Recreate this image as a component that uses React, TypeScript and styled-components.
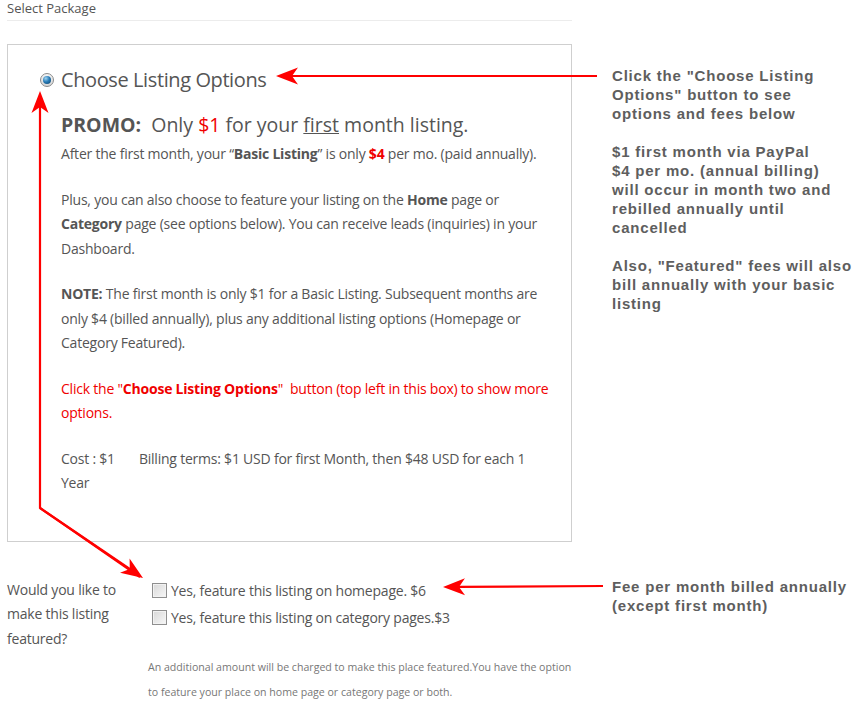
import React from "react"
import styled, { createGlobalStyle } from "styled-components"

const GlobalStyle = createGlobalStyle`
  html, body {
    margin: 0;
    padding: 0;
    background: #fff;
  }
  body {
    font-family: "Open Sans", "Liberation Sans", sans-serif;
    color: #555;
  }
`

const Page = styled.div`
  position: relative;
  width: 862px;
  height: 706px;
  overflow: hidden;
  padding: 0 7px;
  box-sizing: border-box;
`
const Header = styled.div`
  width: 565px;
  font-size: 13px;
  line-height: 16px;
  padding-bottom: 4px;
  border-bottom: 1px solid #ececec;
`
const Row = styled.div<{ $top: number }>`
  display: flex;
  align-items: flex-start;
  gap: 40px;
  margin-top: ${p => p.$top}px;
`
const Box = styled.div`
  width: 565px;
  box-sizing: border-box;
  border: 1px solid #cfcfcf;
  padding: 21px 20px 45px 32px;
  flex-shrink: 0;
`
const TitleRow = styled.div`
  display: flex;
  align-items: center;
  gap: 7px;
  font-size: 20px;
  line-height: 28px;
  letter-spacing: -0.4px;
`
const Radio = styled.span`
  width: 14px;
  height: 14px;
  border-radius: 50%;
  box-sizing: border-box;
  border: 1px solid #8a8a8a;
  background: linear-gradient(#f4f4f4, #d6d6d6);
  display: flex;
  align-items: center;
  justify-content: center;
  &::after {
    content: "";
    width: 8px;
    height: 8px;
    border-radius: 50%;
    background: radial-gradient(circle at 35% 30%, #9fd3f0 0, #2a7db8 45%, #0b3d66 100%);
  }
`
const Content = styled.div`
  margin-left: 21px;
  font-size: 14px;
  line-height: 24.5px;
  letter-spacing: -0.22px;
`
const Promo = styled.div`
  font-size: 19.5px;
  line-height: 28px;
  letter-spacing: 0;
  margin-top: 17px;
  margin-bottom: 3px;
`
const Para = styled.p<{ $red?: boolean }>`
  margin: 0 0 21px;
  color: ${p => (p.$red ? "#f00000" : "#555")};
  &:last-child {
    margin-bottom: 0;
  }
`
const Red = styled.span`
  color: #f00000;
`
const Spacer = styled.span`
  display: inline-block;
  width: 24px;
`
const Note = styled.div<{ $top: number }>`
  margin-top: ${p => p.$top}px;
  width: 250px;
  font-family: "Liberation Sans", Arial, sans-serif;
  font-weight: bold;
  font-size: 15px;
  line-height: 19px;
  letter-spacing: 0.8px;
  color: #5e5e5e;
  white-space: nowrap;
  p {
    margin: 0 0 19px;
  }
`
const Question = styled.div`
  width: 141px;
  flex-shrink: 0;
  font-size: 14px;
  line-height: 24.6px;
  letter-spacing: -0.22px;
`
const Options = styled.div`
  width: 424px;
  flex-shrink: 0;
  padding-left: 4px;
  box-sizing: border-box;
  display: flex;
  flex-direction: column;
  gap: 2px;
  font-size: 14px;
  line-height: 25px;
  letter-spacing: -0.22px;
`
const Option = styled.label`
  display: flex;
  align-items: center;
  gap: 4px;
`
const Check = styled.span`
  width: 15px;
  height: 15px;
  box-sizing: border-box;
  border: 1px solid #8f8f8f;
  background: linear-gradient(135deg, #d8d8d8, #f7f7f7);
  box-shadow: inset 0 0 0 1px #f2f2f2;
`
const Left = styled.div`
  display: flex;
  width: 565px;
  flex-shrink: 0;
`
const Disclaimer = styled.div`
  margin: 4px 0 0 141px;
  font-size: 10.6px;
  line-height: 25px;
  color: #777;
  width: 430px;
`
const Overlay = styled.svg`
  position: absolute;
  left: 0;
  top: 0;
  pointer-events: none;
`

type Pt = [number, number]

const Arrow = ({ points }: { points: Pt[] }) => {
  const tip = points[points.length - 1]
  const prev = points[points.length - 2]
  const dx = tip[0] - prev[0]
  const dy = tip[1] - prev[1]
  const len = Math.hypot(dx, dy)
  const ux = dx / len
  const uy = dy / len
  const px = -uy
  const py = ux
  const back = 22
  const notch = 16
  const half = 8.5
  const b: Pt = [tip[0] - ux * back, tip[1] - uy * back]
  const n: Pt = [tip[0] - ux * notch, tip[1] - uy * notch]
  const head = [
    tip,
    [b[0] + px * half, b[1] + py * half],
    n,
    [b[0] - px * half, b[1] - py * half],
  ]
  const line = points.slice(0, -1).concat([n])
  return (
    <g>
      <polyline
        points={line.map(p => p.join(",")).join(" ")}
        fill="none"
        stroke="#ff0000"
        strokeWidth={2.2}
        strokeLinejoin="miter"
      />
      <polygon points={head.map(p => p.join(",")).join(" ")} fill="#ff0000" />
    </g>
  )
}

export default function App() {
  return (
    <>
      <GlobalStyle />
      <Page>
        <Header>Select Package</Header>
        <Row $top={23}>
          <Box>
            <TitleRow>
              <Radio />
              Choose Listing Options
            </TitleRow>
            <Content>
              <Promo>
                <b>PROMO:</b>&nbsp; Only <Red>$1</Red> for your <u>first</u> month listing.
              </Promo>
              <Para>
                After the first month, your “<b>Basic Listing</b>” is only <Red><b>$4</b></Red> per mo. (paid annually).
              </Para>
              <Para>
                Plus, you can also choose to feature your listing on the <b>Home</b> page or <b>Category</b> page (see options below). You can receive leads (inquiries) in your Dashboard.
              </Para>
              <Para>
                <b>NOTE:</b> The first month is only $1 for a Basic Listing. Subsequent months are only $4 (billed annually), plus any additional listing options (Homepage or Category Featured).
              </Para>
              <Para $red>
                Click the "<b>Choose Listing Options</b>"&nbsp; button (top left in this box) to show more options.
              </Para>
              <Para>
                Cost : $1<Spacer />Billing terms: $1 USD for first Month, then $48 USD for each 1 Year
              </Para>
            </Content>
          </Box>
          <Note $top={22}>
            <p>Click the "Choose Listing<br />Options" button to see<br />options and fees below</p>
            <p>$1 first month via PayPal<br />$4 per mo. (annual billing)<br />will occur in month two and<br />rebilled annually until<br />cancelled</p>
            <p>Also, "Featured" fees will also<br />bill annually with your basic<br />listing</p>
          </Note>
        </Row>
        <Row $top={36}>
          <Left>
            <Question>Would you like to make this listing featured?</Question>
            <Options>
              <Option>
                <Check />
                Yes, feature this listing on homepage. $6
              </Option>
              <Option>
                <Check />
                Yes, feature this listing on category pages.$3
              </Option>
            </Options>
          </Left>
          <Note $top={-1}>
            <p>Fee per month billed annually<br />(except first month)</p>
          </Note>
        </Row>
        <Disclaimer>
          An additional amount will be charged to make this place featured.You have the option to feature your place on home page or category page or both.
        </Disclaimer>
        <Overlay width={862} height={706} viewBox="0 0 862 706">
          <Arrow points={[[597, 76], [276, 76]]} />
          <Arrow points={[[140, 577], [40, 508], [40, 91]]} />
          <Arrow points={[[40, 508], [143, 578]]} />
          <Arrow points={[[603, 586], [443, 587]]} />
        </Overlay>
      </Page>
    </>
  )
}
